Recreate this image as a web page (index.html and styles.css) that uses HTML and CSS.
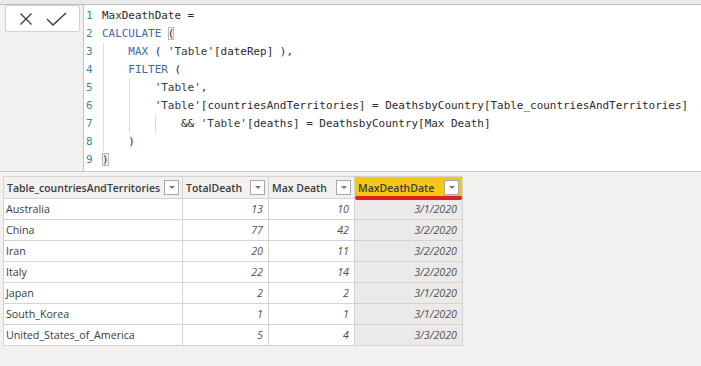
FILE: index.html
```html
<!DOCTYPE html>
<html>
<head>
<meta charset="utf-8">
<link rel="stylesheet" href="styles.css">
</head>
<body>
<div class="topline"></div>
<div class="formula-bar">
  <div class="actions">
    <div class="action-box">
      <svg class="ic" width="14" height="14" viewBox="0 0 14 14"><path d="M1.5 1.5 L12.5 12.5 M12.5 1.5 L1.5 12.5" stroke="#3b3b3b" stroke-width="1.3" fill="none"/></svg>
      <svg class="ic" width="21" height="14" viewBox="0 0 21 14"><path d="M1 7 L7 13 L20 1" stroke="#3b3b3b" stroke-width="1.4" fill="none"/></svg>
    </div>
  </div>
  <div class="editor">
    <div class="line"><span class="ln">1</span><span class="code">MaxDeathDate =</span></div>
    <div class="line"><span class="ln">2</span><span class="code"><span class="kw">CALCULATE</span> <span class="br">(</span></span></div>
    <div class="line"><span class="ln">3</span><span class="code"><span class="g g1"></span>    <span class="kw">MAX</span> ( <span class="str">'Table'</span>[dateRep] ),</span></div>
    <div class="line"><span class="ln">4</span><span class="code"><span class="g g1"></span>    <span class="kw">FILTER</span> (</span></div>
    <div class="line"><span class="ln">5</span><span class="code"><span class="g g1"></span><span class="g g2"></span>        <span class="str">'Table'</span>,</span></div>
    <div class="line"><span class="ln">6</span><span class="code"><span class="g g1"></span><span class="g g2"></span>        <span class="str">'Table'</span>[countriesAndTerritories] = DeathsbyCountry[Table_countriesAndTerritories]</span></div>
    <div class="line"><span class="ln">7</span><span class="code"><span class="g g1"></span><span class="g g2"></span><span class="g g3"></span>            &amp;&amp; <span class="str">'Table'</span>[deaths] = DeathsbyCountry[Max Death]</span></div>
    <div class="line"><span class="ln">8</span><span class="code"><span class="g g1"></span>    )</span></div>
    <div class="line"><span class="ln">9</span><span class="code"><span class="br">)</span></span></div>
  </div>
</div>
<div class="table-area">
  <table class="grid">
    <colgroup><col class="c1"><col class="c2"><col class="c3"><col class="c4"></colgroup>
    <thead>
      <tr>
        <th><div class="hd"><span>Table_countriesAndTerritories</span><span class="dd"></span></div></th>
        <th><div class="hd"><span>TotalDeath</span><span class="dd"></span></div></th>
        <th><div class="hd"><span>Max Death</span><span class="dd"></span></div></th>
        <th class="sel"><div class="hd"><span>MaxDeathDate</span><span class="dd"></span></div><span class="redline"></span></th>
      </tr>
    </thead>
    <tbody>
      <tr><td>Australia</td><td class="num">13</td><td class="num">10</td><td class="num calc">3/1/2020</td></tr>
      <tr><td>China</td><td class="num">77</td><td class="num">42</td><td class="num calc">3/2/2020</td></tr>
      <tr><td>Iran</td><td class="num">20</td><td class="num">11</td><td class="num calc">3/2/2020</td></tr>
      <tr><td>Italy</td><td class="num">22</td><td class="num">14</td><td class="num calc">3/2/2020</td></tr>
      <tr><td>Japan</td><td class="num">2</td><td class="num">2</td><td class="num calc">3/1/2020</td></tr>
      <tr><td>South_Korea</td><td class="num">1</td><td class="num">1</td><td class="num calc">3/1/2020</td></tr>
      <tr><td>United_States_of_America</td><td class="num">5</td><td class="num">4</td><td class="num calc">3/3/2020</td></tr>
    </tbody>
  </table>
</div>
</body>
</html>
```
FILE: styles.css
```css
html, body {
  margin: 0;
  padding: 0;
}
body {
  width: 701px;
  height: 366px;
  overflow: hidden;
  background: #f2f1f0;
  font-family: "Open Sans", "Noto Sans", sans-serif;
}
.topline {
  height: 4px;
  background: #e9e9e9;
  border-bottom: 1px solid #bdbdbd;
}
.formula-bar {
  display: flex;
  height: 166px;
  border-bottom: 1px solid #c9c9c9;
}
.actions {
  width: 83px;
  background: #f2f1f0;
  padding: 0 0 0 5px;
  box-sizing: border-box;
}
.action-box {
  width: 75px;
  height: 27px;
  box-sizing: border-box;
  background: #fff;
  border: 1px solid #d2d2d2;
  border-radius: 2px;
  display: flex;
  align-items: center;
  gap: 13px;
  padding-left: 13px;
}
.editor {
  flex: 1;
  background: #fff;
  border-left: 1px solid #c4c4c4;
  padding-top: 2px;
  font-family: "DejaVu Sans Mono", monospace;
  font-size: 10.95px;
  color: #2b2b2b;
}
.line {
  height: 18px;
  line-height: 18px;
  display: flex;
  white-space: pre;
}
.ln {
  width: 18px;
  padding-left: 2px;
  box-sizing: border-box;
  color: #2b8ca8;
}
.code {
  position: relative;
}
.kw {
  color: #3e6aa3;
}
.str {
  color: #3a3a3a;
}
.br {
  outline: 1px solid #b8b8b8;
  outline-offset: -1px;
  background: #f4f4f4;
}
.g {
  position: absolute;
  top: 0;
  width: 1px;
  height: 18px;
  background: #dcdcdc;
}
.g1 { left: 1px; }
.g2 { left: 27px; }
.g3 { left: 53px; }
.table-area {
  padding: 4px 0 0 3px;
}
.grid {
  border-collapse: collapse;
  table-layout: fixed;
  width: 459px;
  font-size: 10.7px;
  color: #3a3a3a;
}
.c1 { width: 179px; }
.c2 { width: 86px; }
.c3 { width: 86px; }
.c4 { width: 108px; }
.grid th {
  height: 21px;
  padding: 0;
  background: #f2f1f0;
  border: 1px solid #d4d4d4;
  font-weight: 600;
  font-size: 10.5px;
  text-align: left;
  position: relative;
  color: #3c3c3c;
}
.hd {
  display: flex;
  align-items: center;
  justify-content: space-between;
  padding: 0 3px 0 3px;
}
.dd {
  width: 13px;
  height: 13px;
  border: 1px solid #a8a8a8;
  background: #fff;
  position: relative;
  flex: none;
}
.dd::after {
  content: "";
  position: absolute;
  left: 4px;
  top: 5px;
  border-left: 3px solid transparent;
  border-right: 3px solid transparent;
  border-top: 3px solid #777;
}
.grid th.sel {
  background: #f2c811;
}
.redline {
  position: absolute;
  left: 0;
  right: 0;
  bottom: -2px;
  height: 4px;
  border-radius: 2px;
  background: #e0201c;
}
.grid td {
  height: 20px;
  padding: 0 2px;
  background: #fff;
  border: 1px solid #d4d4d4;
  white-space: nowrap;
}
.grid td.num {
  text-align: right;
  font-style: italic;
  padding-right: 5px;
  color: #505050;
}
.grid td.calc {
  background: #ebeae9;
}
```
